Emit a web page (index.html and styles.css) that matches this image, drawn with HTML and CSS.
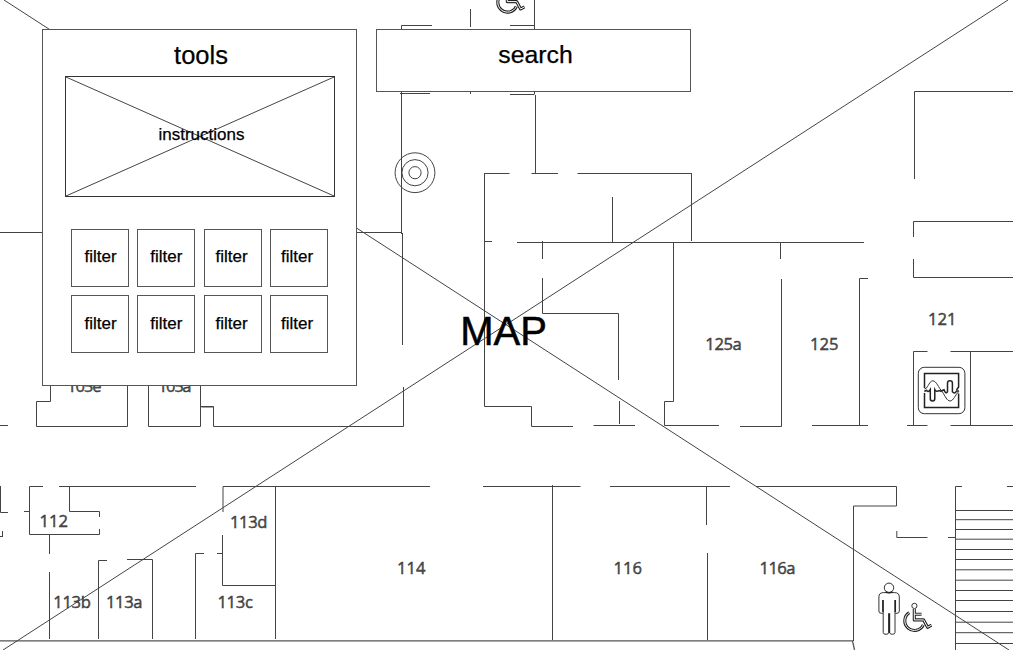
FILE: index.html
```html
<!DOCTYPE html>
<html lang="en">
<head>
<meta charset="utf-8">
<title>Map wireframe</title>
<link rel="stylesheet" href="styles.css">
</head>
<body>
<main class="screen">
  <svg class="map" viewBox="0 0 1013 650" width="1013" height="650">
    <defs>
      <g id="wheelchair">
        <g class="pipe-dark">
          <path d="M909.2 612.6A9.7 9.7 0 1 0 923.3 624.8"/>
          <path d="M914.3 609V619.9H923.6L927.6 627.3L931.5 625.2M914.3 614.2H921.5"/>
        </g>
        <g class="pipe-light">
          <path d="M909.2 612.6A9.7 9.7 0 1 0 923.3 624.8"/>
          <path d="M914.3 609V619.9H923.6L927.6 627.3L931.5 625.2M914.3 614.2H921.5"/>
        </g>
        <circle class="icon" cx="914.4" cy="605.9" r="2.6"/>
      </g>
    </defs>

    <!-- upper corridor and rooms -->
    <path class="wall" d="M0 232.5H42M357 232.5H401.5M401.5 234V25.5H432M470.5 9V27M470.5 88V94M510 25.5H534.5V0M534.5 25V94M400 93.5H430M510 94.5H534.5M535.5 95V173.5M402.5 233V345M403.5 387V426.5H213.5V407H201.5"/>
    <path class="wall" d="M484 173.5H509.5M531.5 173.5H558M577.5 173.5H692M484.5 173V406.5H531.5V426.5H573M484.5 241.5H492M691.5 173.5V241M612.5 197V243M517 242.5H864"/>
    <path class="wall" d="M542.5 241V259M542.5 278V313.5H618.5V380M619.5 401V424M593.5 425.5H635M673.5 242V401.5H664.5V425.5H719M780.5 242V259M781.5 279V426.5H740M812 425.5H868M859.5 425V278.5H868"/>
    <path class="wall" d="M1013 91.5H914.5V179M913.5 237V221.5H1013M913.5 259V277.5H1013M913.5 426V351.5H927.5M950.5 351.5H1013M970.5 351V426M907 425.5H927.5M950.5 425.5H1013"/>
    <path class="wall" d="M50.5 386V401.5H36.5V426.5H127.5V386M148.5 386V426.5H200.5V386M201 406.5H213.5V426M0 425.5H8"/>

    <!-- lower rooms -->
    <path class="wall" d="M0.5 486V512.5H8M2.5 531V537M0 536.5H3M24 511.5H29.5M43 486.5H29.5V534.5H99.5V529M59 486.5H196M69.5 487V511.5H99.5V517M49.5 535V554M49.5 572V639M98.5 639V560.5H107M127 559.5H152.5V639"/>
    <path class="wall" d="M195.5 639V553.5H204M217 553.5H222.5M222.5 535V585.5H275.5M223 512V486.5H430M275.5 486V639M483 486.5H580.5M552.5 485V640M610 486.5H730M706.5 487V525M707.5 553V640"/>
    <path class="wall" d="M756 486.5H896.5V506H853.5V641M896.8 531V537.5H927.5M948 537.5H955.5M962 486.5H955.5V650M1007 486.5H1013"/>
    <path class="wall" d="M955.5 510.5H1013M955.5 519.7H1013M955.5 529.5H1013M955.5 539.2H1013M955.5 549.5H1013M955.5 559.5H1013M955.5 569.8H1013M955.5 580.2H1013M955.5 590.5H1013M955.5 600.5H1013M955.5 611.5H1013M955.5 622.2H1013M955.5 632.7H1013M955.5 643.5H1013"/>
    <path class="sill" d="M0 640.8H852.5L854.5 650"/>

    <g class="spot">
      <circle cx="415" cy="172.7" r="19.9"/>
      <circle cx="415" cy="172.7" r="13.1"/>
      <circle cx="415" cy="172.7" r="6.1"/>
    </g>

    <g class="rooms">
      <text x="67" y="391.8" textLength="34.5">105e</text>
      <text x="158" y="391.8" textLength="33.5">105a</text>
      <text x="705.3" y="350.2" textLength="36.5">125a</text>
      <text x="810" y="350.2" textLength="28.5">125</text>
      <text x="928" y="325" textLength="28.5">121</text>
      <text x="39.5" y="526.6" textLength="28.5">112</text>
      <text x="230" y="528.2" textLength="37.5">113d</text>
      <text x="53.3" y="608.2" textLength="37.5">113b</text>
      <text x="106" y="608.2" textLength="36.5">113a</text>
      <text x="217.4" y="608.2" textLength="35.5">113c</text>
      <text x="397" y="573.5" textLength="28.5">114</text>
      <text x="613.5" y="574.3" textLength="28.5">116</text>
      <text x="759.5" y="574.3" textLength="36">116a</text>
    </g>

    <!-- restroom figure -->
    <g class="icon">
      <circle cx="889" cy="587.8" r="4.7"/>
      <path d="M883 613.3H881.3Q878.9 613.3 878.9 611V597Q878.9 592.6 883.5 592.6H894.5Q899.3 592.6 899.3 597V611Q899.3 613.3 897 613.3H895.2"/>
      <path d="M883.2 600V632.5Q883.2 634.3 886 634.3Q888.7 634.3 888.7 632.5V613.5M889.7 613.5V632.5Q889.7 634.3 892.4 634.3Q895 634.3 895 632.5V600"/>
      <path class="bold" d="M885.6 591.9Q889 593.6 892.6 591.9M882.9 600V612M895.3 600V612M889.2 613.2V633"/>
    </g>
    <use href="#wheelchair"/>
    <use href="#wheelchair" x="-407" y="-618.3"/>

    <!-- elevator -->
    <g class="icon">
      <rect x="918.3" y="367.3" width="46.6" height="46.4" rx="6"/>
      <path class="bold" d="M924.5 388V373.5H958.6V387L956.5 390M924.5 393V407.5H958.6V393.5"/>
      <path d="M924.5 389L926.5 388C929 384.5 930.3 380.8 932.8 380.8C936.5 380.8 938.5 388 942.5 392C945 396 947 401 950 401C953.5 401 955 395 958.8 391.6"/>
      <path class="bold" d="M924.4 391.5L926.5 390.2Q928 393 930.3 389.5V398.5Q930.3 401 932.5 401Q934.8 401 934.8 398.5V389.5Q936.5 392.5 939 390.5L941.5 391.5"/>
      <path class="bold" d="M941 391L944 389.8Q945.5 394.3 947.5 391.8V383Q947.5 380.8 950 380.8Q952.4 380.8 952.4 383V391.8Q954.8 394.5 956.5 391H959"/>
    </g>

    <path class="diagonal" d="M4 0L1009 650M3 650L1008 0"/>
    <text class="map-title" x="460.3" y="344.9">MAP</text>
  </svg>

  <section class="panel tools">
    <h2 class="title">tools</h2>
    <div class="instructions">
      <svg class="cross" viewBox="0 0 268 119" preserveAspectRatio="none"><path d="M0 0L268 119M268 0L0 119"/></svg>
      <span class="caption">instructions</span>
    </div>
    <div class="filters">
      <div class="filter">filter</div><div class="filter">filter</div><div class="filter">filter</div><div class="filter">filter</div>
      <div class="filter">filter</div><div class="filter">filter</div><div class="filter">filter</div><div class="filter">filter</div>
    </div>
  </section>

  <section class="panel search"><h2 class="title">search</h2></section>
</main>
</body>
</html>
```

FILE: styles.css
```css
* { box-sizing: border-box; }

body {
  margin: 0;
  background: #fff;
  color: #000;
  font-family: "Liberation Sans", Arial, sans-serif;
}

.screen {
  position: relative;
  width: 1013px;
  height: 650px;
  overflow: hidden;
}

.map { display: block; }

.wall, .sill, .diagonal, .spot, .icon {
  fill: none;
  stroke: #444;
  stroke-width: 1;
}

.sill { stroke: #555; stroke-width: 1.3; }
.icon { stroke: #333; }
.bold { stroke: #222; stroke-width: 1.5; }

.pipe-dark, .pipe-light { fill: none; stroke-linejoin: round; }
.pipe-dark { stroke: #222; stroke-width: 3.1; }
.pipe-light { stroke: #fff; stroke-width: 1; }

.rooms {
  font-family: "Open Sans", "Noto Sans", sans-serif;
  font-size: 16.6px;
  fill: #555;
  stroke: #222;
  stroke-width: 0.4;
}

.map-title {
  font-size: 40px;
  stroke: #000;
  stroke-width: 0.5;
}

.panel {
  position: absolute;
  top: 29px;
  width: 315px;
  background: #fff;
  border: 1px solid #555;
  -webkit-text-stroke: 0.25px #000;
}

.tools {
  left: 42px;
  height: 357px;
  padding: 10px 22px 0;
}

.search {
  left: 376px;
  height: 63px;
  padding: 10px 0 0 4px;
}

.title {
  margin: 0;
  font-size: 25.5px;
  font-weight: 400;
  line-height: 30px;
  text-align: center;
}

.tools .title { padding-left: 3px; }
.search .title { font-size: 24.8px; }

.instructions {
  display: grid;
  width: 270px;
  height: 121px;
  margin-top: 6px;
  border: 1px solid #333;
}

.cross, .caption { grid-area: 1 / 1; }

.cross {
  width: 268px;
  height: 119px;
  fill: none;
  stroke: #444;
}

.caption {
  padding: 47px 0 0 3px;
  font-size: 17px;
  line-height: 22px;
  text-align: center;
}

.filters {
  display: grid;
  grid-template-columns: repeat(4, 58px);
  grid-auto-rows: 58px;
  justify-content: space-between;
  row-gap: 8px;
  width: 257px;
  margin: 32px 0 0 6px;
}

.filter {
  padding-top: 16px;
  border: 1px solid #555;
  font-size: 17px;
  line-height: 22px;
  text-align: center;
}

.filter:nth-child(n + 5) { padding-top: 17px; }
.filter:nth-child(4n + 1) { padding-left: 1px; }
.filter:nth-child(4n + 3) { padding-right: 2px; }
.filter:nth-child(4n) { padding-right: 4px; }
```
